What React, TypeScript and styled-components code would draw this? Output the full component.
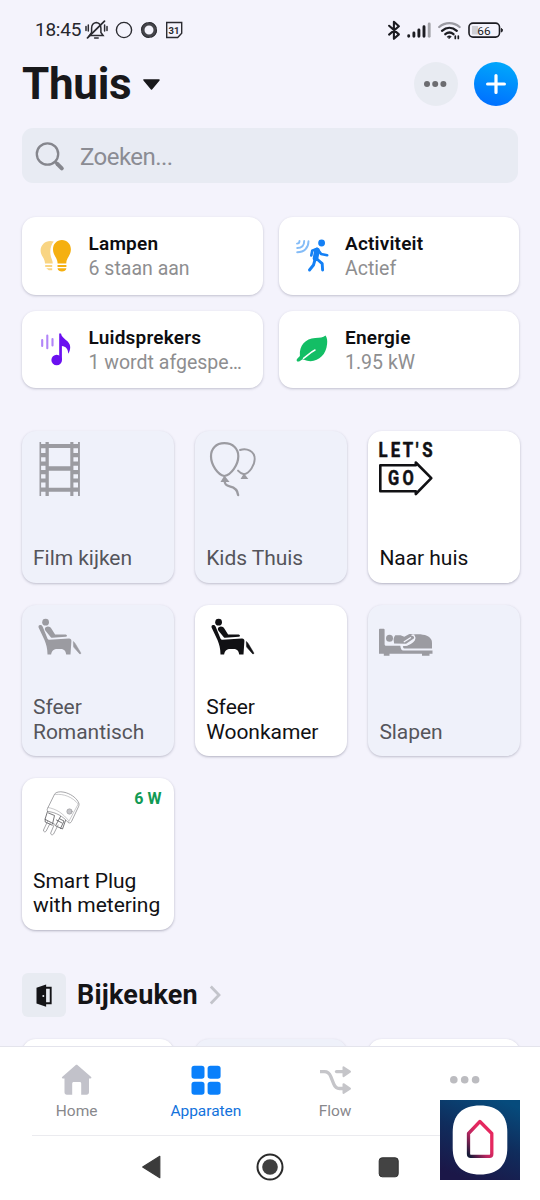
import React from "react";
import styled, { createGlobalStyle } from "styled-components";

const Global = createGlobalStyle`
  * { box-sizing: border-box; }
  body { margin: 0; background: #f4f3fc; font-family: Roboto, "Liberation Sans", sans-serif; }
  svg { display: block; flex: none; overflow: visible; }
`;

const Screen = styled.div`
  width: 540px;
  height: 1200px;
  display: flex;
  flex-direction: column;
  overflow: hidden;
  background: #f4f3fc;
`;

const StatusBar = styled.header`
  flex: none;
  height: 60px;
  padding: 0 38.5px 0 35px;
  display: flex;
  align-items: center;
  justify-content: space-between;
`;

const StatusGroup = styled.div<{ $gap: number }>`
  display: flex;
  align-items: center;
  gap: ${(p) => p.$gap}px;
`;

const Clock = styled.span`
  font-size: 19px;
  line-height: 22px;
  letter-spacing: -0.25px;
  color: #26262c;
  width: 46px;
  white-space: nowrap;
`;

const TitleBar = styled.div`
  flex: none;
  height: 48px;
  padding: 0 22px;
  display: flex;
  align-items: center;
  gap: 16.5px;
`;

const HomeTitle = styled.div`
  flex: 1;
  display: flex;
  align-items: center;
  gap: 12px;
`;

const Title = styled.h1`
  margin: 0;
  font-size: 44px;
  line-height: 48px;
  letter-spacing: -0.3px;
  font-weight: 700;
  color: #18181b;
`;

const RoundButton = styled.button<{ $primary?: boolean }>`
  width: 44px;
  height: 44px;
  border: 0;
  border-radius: 50%;
  padding: 0;
  display: grid;
  place-items: center;
  background: ${(p) => (p.$primary ? "linear-gradient(195deg, #00a8fb 8%, #0072ff 88%)" : "#e8ebf2")};
`;

const SearchField = styled.div`
  flex: none;
  height: 55px;
  margin: 20px 22px 0;
  padding: 2px 0 0 13px;
  border-radius: 11px;
  background: #e8ebf3;
  display: flex;
  align-items: center;
  gap: 16px;
  font-size: 24px;
  letter-spacing: -0.55px;
  color: #8b8c93;
`;

const Content = styled.main`
  flex: 1;
  min-height: 0;
  overflow: hidden;
  padding: 34px 20px 0 22px;
`;

const Summary = styled.section`
  display: grid;
  grid-template-columns: 240.5px 240.5px;
  gap: 16px;
`;

const SummaryCard = styled.article`
  height: 77.5px;
  border-radius: 14px;
  background: #fff;
  box-shadow: 0 1px 2.5px rgba(40, 40, 70, 0.25);
  padding: 0 14px 0 17px;
  display: flex;
  align-items: center;
  gap: 15.5px;
`;

const SummaryText = styled.div`
  min-width: 0;
  flex: 1;
  padding-top: 1px;
`;

const SummaryName = styled.div`
  font-size: 19px;
  line-height: 25px;
  font-weight: 600;
  letter-spacing: 0.2px;
  color: #0d0d10;
`;

const SummaryState = styled.div`
  font-size: 19.5px;
  line-height: 25px;
  letter-spacing: 0.01px;
  color: #8e8e90;
  white-space: nowrap;
`;

const DeviceGrid = styled.section`
  display: grid;
  grid-template-columns: repeat(3, 151.5px);
  grid-auto-rows: 151.5px;
  gap: 22px 21.7px;
`;

const Favourites = styled(DeviceGrid)`
  margin-top: 43px;
`;

const DeviceTile = styled.article<{ $on?: boolean }>`
  border-radius: 14px;
  padding: 11px 8px 11.8px 11px;
  display: flex;
  flex-direction: column;
  justify-content: space-between;
  background: ${(p) => (p.$on ? "#fff" : "#eff1fa")};
  color: ${(p) => (p.$on ? "#111114" : "#55555b")};
  box-shadow: 0 1px 2.5px rgba(40, 40, 70, ${(p) => (p.$on ? 0.32 : 0.26)});
`;

const TileTop = styled.div<{ $on?: boolean }>`
  display: flex;
  justify-content: space-between;
  color: ${(p) => (p.$on ? "#111114" : "#9b9ba1")};
`;

const Power = styled.span`
  margin: 1px 4px 0 0;
  font-size: 16px;
  line-height: 18px;
  font-weight: 700;
  color: #119a54;
`;

const TileName = styled.div`
  font-size: 21px;
  line-height: 24.5px;
  letter-spacing: -0.04px;
  white-space: pre-line;
`;

const ZoneHeader = styled.div`
  margin: 43.5px 0 22px;
  height: 44px;
  display: flex;
  align-items: center;
  gap: 11px;
`;

const ZoneIcon = styled.span`
  width: 44px;
  height: 44px;
  border-radius: 6px;
  background: #e8ebf2;
  display: grid;
  place-items: center;
`;

const ZoneName = styled.h2`
  margin: 0;
  font-size: 27px;
  line-height: 32px;
  font-weight: 700;
  letter-spacing: 0.2px;
  color: #141417;
`;

const Footer = styled.footer`
  flex: none;
  position: relative;
  height: 154px;
  border-top: 1px solid #e4e4ec;
  background: #fff;
`;

const TabBar = styled.nav`
  height: 88px;
  margin: 0 11px 0 12px;
  display: grid;
  grid-template-columns: repeat(4, 1fr);
`;

const Tab = styled.a<{ $active?: boolean }>`
  display: flex;
  flex-direction: column;
  align-items: center;
  padding-top: 17px;
  gap: 5px;
  font-size: 15.5px;
  line-height: 20px;
  letter-spacing: -0.05px;
  color: ${(p) => (p.$active ? "#1272dc" : "#88888c")};
`;

const SystemNav = styled.div`
  height: 65px;
  margin: 0 32px;
  padding: 0 0 2px;
  border-top: 1px solid #ebebef;
  display: flex;
  align-items: center;
  justify-content: center;
`;

const SystemKey = styled.span`
  width: 118.5px;
  display: grid;
  place-items: center;
`;

const AppBadge = styled.div`
  position: absolute;
  right: 20px;
  top: 53px;
  width: 80px;
  height: 80px;
`;

/* status bar icons */
const Muted = () => (
  <svg width="23" height="20" viewBox="85 20 23 20" fill="none" stroke="#2b2b31" strokeWidth="1.5" strokeLinecap="round">
    <path d="M89.5 35.5h13.600l-2.200-3v-4.200c0-3.600-2-5.500-4.600-5.800-2.600.3-4.700 2.200-4.700 5.800v4.200z" />
    <path d="M87.5 37.800 104.500 21.200" strokeWidth="1.8" />
    <path d="M94.600 38h3.600M86 26.500v4M88.300 25v6M104.600 25v6M107 26.500v4" />
  </svg>
);
const Ring = ({ bold }: { bold?: boolean }) => (
  <svg width="17" height="17" viewBox="0 0 17 17" fill="none">
    {bold ? (
      <>
        <circle cx="8" cy="8" r="6.300" stroke="#45454b" strokeWidth="3.600" />
        <circle cx="8" cy="8" r="7.400" stroke="#2b2b31" strokeWidth="1" strokeDasharray="9 2.5" />
      </>
    ) : (
      <circle cx="8" cy="8" r="7.600" stroke="#2b2b31" strokeWidth="1.400" />
    )}
  </svg>
);
const Calendar = () => (
  <svg width="17" height="17" viewBox="0 0 17 17">
    <path d="M.7.5h15v10.800L11.700 15.500H.7z" fill="none" stroke="#2b2b31" strokeWidth="1.400" />
    <text x="8" y="11.500" textAnchor="middle" fontSize="9.500" fontWeight="700" fill="#2b2b31">31</text>
  </svg>
);
const Bluetooth = () => (
  <svg width="13" height="20" viewBox="386.500 19 13 20" fill="none" stroke="#1c1c22" strokeWidth="2.100" strokeLinejoin="round" strokeLinecap="round">
    <path d="m388.600 24.800 9.800 8.600-5 4.400V20.800l5 4.400-9.800 8.400" />
  </svg>
);
const Signal = () => (
  <svg width="24" height="16" viewBox="0 0 24 16" strokeWidth="2.900" strokeLinecap="round" stroke="#1c1c22">
    <path d="M1.700 13.800v.4M6.900 11v3.200M11.900 8v6.200M17 4.800v9.400" />
    <path d="M22.200 2v12.200" stroke="#a4a4aa" />
  </svg>
);
const Wifi = () => (
  <svg width="23" height="18" viewBox="437 20 23 18" fill="none" strokeLinecap="round" strokeWidth="2.300">
    <path d="M438.200 26c6-5.200 14.400-5.200 20.400 0" stroke="#9a9aa2" />
    <path d="M441 29.800c4.600-4 10.200-4 14.800 0M444.300 33.200c2.600-2.200 5.700-2.200 8.200 0" stroke="#1c1c22" />
    <path d="M446.300 35.600c1.300-1 2.700-1 4 0l-2 2z" fill="#1c1c22" stroke="#1c1c22" strokeWidth=".6" />
    <path d="M454.300 37.500v-2.500M457.300 35v2.500" stroke="#1c1c22" strokeWidth="1.700" />
  </svg>
);
const Battery = () => (
  <svg width="34" height="16" viewBox="467 21.500 34 16">
    <rect x="468" y="22.600" width="30.500" height="14" rx="4" fill="none" stroke="#1c1c22" strokeWidth="1.600" />
    <path d="M471 25.500h6v8.500h-6z" fill="#d0d0d6" />
    <path d="M500.300 28c1.500 0 1.500 3.500 0 3.500z" fill="#1c1c22" stroke="#1c1c22" />
    <text x="483" y="34" textAnchor="middle" fontSize="11.800" fill="#1c1c22">66</text>
  </svg>
);

const Caret = () => (
  <svg width="17" height="12" viewBox="0 0 17 12">
    <path d="M1 1.900h15L8.500 10.900z" fill="#18181b" stroke="#18181b" strokeWidth="1.500" strokeLinejoin="round" />
  </svg>
);
const Dots = ({ color, r, gap }: { color: string; r: number; gap: number }) => (
  <svg width={gap * 2 + r * 2} height={r * 2} fill={color}>
    <circle cx={r} cy={r} r={r} />
    <circle cx={r + gap} cy={r} r={r} />
    <circle cx={r + gap * 2} cy={r} r={r} />
  </svg>
);
const Plus = () => (
  <svg width="20" height="20" stroke="#fff" strokeWidth="3.200" strokeLinecap="round">
    <path d="M10 1.600v16.800M1.600 10h16.800" />
  </svg>
);
const Magnifier = () => (
  <svg width="29" height="29" viewBox="35 142 29 29" fill="none" stroke="#85868d">
    <circle cx="47.500" cy="154" r="10.700" strokeWidth="2.300" />
    <path d="m55 161.500 2.300 2.300" strokeWidth="2.500" />
    <path d="m57.300 163.800 4.500 4.500" strokeWidth="4" strokeLinecap="round" />
  </svg>
);

/* summary icons */
const Bulbs = () => (
  <svg width="34" height="34" viewBox="39 239 34 34">
    <g fill="#f9d583">
      <path d="M53.800 241.500c-7-2.200-13.200 2.500-13.200 9 0 5.500 4.400 7.400 4.400 13h7.800c0-3-2.500-6-2.500-11.500 0-4.500 1.300-8 3.500-10.500z" />
      <path d="M45.200 265h7v1.900h-7zM46.200 268.300h6v1.900h-3.400z" />
    </g>
    <g fill="#f5b010">
      <path d="M61.900 240c-5.100 0-8.900 4-8.900 9.300 0 6.500 4.500 8 4.600 14.200h8.700c.1-6.200 4.600-7.700 4.600-14.200 0-5.300-3.900-9.300-9-9.300z" />
      <path d="M57.500 265h8.900v1.900h-8.900zM57.500 268.300h8.900c-.5 4.300-8.400 4.300-8.900 0z" />
    </g>
  </svg>
);
const Motion = () => (
  <svg width="34" height="34" viewBox="296 239 34 34" fill="none" strokeLinecap="round" strokeLinejoin="round">
    <g stroke="#84bcf7" strokeWidth="1.900">
      <path d="M297 243.600c1.700 0 2.500-.8 2.500-2.600M297.200 248c4.300 0 7-2.500 7-7M297.200 252.200c7 0 11.300-4.300 11.300-11" />
    </g>
    <circle cx="321.600" cy="243" r="3.400" fill="#1480f5" />
    <g stroke="#1480f5">
      <path d="m311.300 255.500.9-4.700 5-2 3.800 5.100 6.200 1.300" strokeWidth="2.600" />
      <path d="m317 250.500-1.500 8" strokeWidth="5.600" />
      <path d="m315.200 259-1.700 6-4 5M317.500 259.500l4.700 4.200.4 6.300" strokeWidth="2.900" />
    </g>
  </svg>
);
const Music = () => (
  <svg width="34" height="34" viewBox="39 332 34 34">
    <path d="M42.200 340v6M47.300 335.600v12.600M52.500 339v6.500" stroke="#b184f8" strokeWidth="2.100" strokeLinecap="round" />
    <circle cx="56.700" cy="360" r="5.300" fill="#6a10f0" />
    <path d="M59.200 333.500h1.800c.8 5.500 9.200 7 9.200 13.500 0 2.500-.6 4.600-2 6.800 0-5-2.500-7.300-6.300-7.800v14h-2.700z" fill="#6a10f0" />
  </svg>
);
const Leaf = () => (
  <svg width="34" height="34" viewBox="296 332 34 34">
    <path d="M325.500 335.500c1.600 2 2 5 1.600 8.600-1.100 11.500-9.600 18.700-20 16.700-1.700-.3-3-.9-4.500-1.500l-3.500 2.100c-2 .8-3.300-1-1.900-2.700l2.700-2.700c-.8-10.600 5.500-17.200 15.300-17.900 4.800-.4 7.800-.6 10.300-2.600z" fill="#13be65" />
    <path d="M303.500 358.300c3.500-2.300 6.500-5.800 11.500-8.300" stroke="#fff" strokeWidth="1.500" fill="none" strokeLinecap="round" />
  </svg>
);

/* device icons, all on a 54 unit canvas */
const DeviceSvg = styled.svg`
  width: 54px;
  height: 54px;
`;
const Film = () => (
  <DeviceSvg viewBox="0 0 54 54" fill="currentColor">
    <path d="M6.500 0h1.600v54H6.500zM12.500 0h3.300v54h-3.300zM37.300 0h3.100v54h-3.100zM45 0h1.900v54H45zM15 2h23v4H15zM15 24.300h23v4.400H15zM15 45.800h23v4H15z" />
    {[2, 11, 19.600, 28, 36.400, 45.600].map((y) => (
      <path key={y} d={`M7 ${y}h6v4.200h-6zM39.500 ${y}h6v4.200h-6z`} />
    ))}
  </DeviceSvg>
);
const Balloons = () => (
  <DeviceSvg viewBox="0 0 54 54" fill="none" stroke="currentColor" strokeLinecap="round">
    <path d="M18.300 1.200C9.800 1.200 5 7 5 14.200c0 8.500 6.700 18.600 13.300 19.800 7-1.200 14-11.300 14-19.800C32.300 7 27.200 1.200 18.300 1.200z" strokeWidth="2.200" />
    <path d="m18.500 35-2.600 4.200h6z" fill="currentColor" strokeWidth="1.600" />
    <path d="M18.700 39c0 3.500 1.300 4.500 5 5.300 4.500 1 8 3.500 8.400 8.700" strokeWidth="2.400" />
    <path d="M34 8c6.700-2.400 14.700 1 14.700 9 0 6-5 14.300-10.700 15.300-2.200-.4-4.200-1.700-6-3.700" strokeWidth="1.900" />
    <path d="m38 32.500-2.300 3.800h5.300z" fill="currentColor" strokeWidth="1.300" />
  </DeviceSvg>
);
const LetsGo = () => (
  <DeviceSvg viewBox="0 0 54 54" fill="currentColor" fontFamily="Roboto, sans-serif" fontWeight="700">
    <g stroke="currentColor" strokeWidth=".5" strokeLinejoin="round">
      <text transform="translate(-.6 14.700) scale(.84 1)" x="0 14.800 29 44.500 52.100" fontSize="20">LET'S</text>
      <text transform="translate(9 43.200) scale(.84 1)" x="0 17.300" fontSize="19.500">GO</text>
    </g>
    <path d="M1.300 23.300h35.500v-2.800L52.300 36.200 36.800 52v-2.800H1.300z" fill="none" stroke="currentColor" strokeWidth="2.600" strokeLinejoin="round" />
  </DeviceSvg>
);
const Recliner = () => (
  <DeviceSvg viewBox="0 0 54 54" fill="currentColor">
    <circle cx="12.600" cy="6.200" r="3.400" />
    <path d="M6.300 9.300c1.500-.8 2.700-.2 3.300 1.200l5 12.200c.4.800.9 1.100 1.700 1l19.500-1.300c1.800-.1 2.700.9 2.600 2.600l-.9 13.500h-4.300c-.4-3.900-2.500-5.500-5.700-5.500h-3.300c-3.200 0-5.400 1.600-6.100 5.500h-3.600c0-6-1.300-10.200-3-14.500L5.600 11.500c-.3-1 0-1.800.7-2.200z" />
    <path d="M12.800 11.200c2.200-1.200 4.500-.5 5.700 1.500l3.600 5.800 10.600-.1c1.700.1 1.700 2.200 0 2.400l-13.500 1c-1 0-1.500-.3-2-1.200L12.300 14.500c-.8-1.400-.5-2.600.5-3.300z" />
    <path d="M40.300 25.500l.2 4.700c0 .6.200 1 .6 1.400l5.400 6.100c.7.600 1.600 0 1.200-1l-5.400-9c-.6-1-1.900-2.300-2-2.200z" stroke="currentColor" strokeWidth=".5" />
  </DeviceSvg>
);
const Bed = () => (
  <DeviceSvg viewBox="0 0 54 54" fill="currentColor">
    <path d="M.9 12.800h3.800c.6 0 .9.300.9.900v14.600c0 .8.500 1.500 1.500 1.500h14.200c.5 3 1 4.700 3 4.700h29.200v3.200h-3v2h-7.500v-2H10.500v2H4.800v-2H0V13.700c0-.6.300-.9.900-.9z" />
    <circle cx="10.500" cy="22.300" r="3.500" />
    <path d="M16.300 19.200h5.200l3.800 1.600 4.600-2.600c3.600-.5 7 .7 5.200 4l-8 5.500-12-.2c0-3.200-1.600-4.600 1.200-8.300z" />
    <path d="M34.500 18.400c10-.9 16 1.200 18 5.600.4 1 .5 2 .5 3.500v5H25.500c-1.500 0-1.500-1.500-1.700-3h3.400c4-1.500 7-3.500 8.500-6 .9-2 .5-3.700-1.200-5.100z" />
    <path d="m25.200 25.700 6.300-4M22.300 29.500l6-.5c4-1.700 7.200-4.500 7.500-6.500.2-2-1-3.200-2.800-3.300" stroke="#f3f4fc" strokeWidth="1.300" strokeLinecap="round" fill="none" />
  </DeviceSvg>
);
const SmartPlug = () => (
  <DeviceSvg viewBox="0 0 54 54" fill="none" stroke="#88888c" strokeWidth=".75" strokeLinejoin="round" strokeLinecap="round">
    <path d="M22 4.500c1-1.300 4.500-2.300 9-1.300 6 1.300 11.500 5 14 9.300 1.300 2 1.300 3.300.5 5.200L38.500 32.500c-.7 1.400-2 2-3.300 1-5.500-6.500-12.200-10-20-11-1.200-1-1.400-1.800-.7-3z" />
    <path d="M22.500 5.500c8-1 17 2.500 22.700 9.500L35.500 33M15 18.500c8.700 1.500 15 6 20.500 13" opacity=".6" />
    <circle cx="36.500" cy="22.500" r="2.700" fill="#c4c4c8" strokeWidth=".5" />
    <path d="m14.500 22.500-2.500 7.800 8.500 4.500M27.500 27.500l-5 9.300 7 3.200 3-8.500M15.500 24l6 2.500-2 8.500M27 30l4 2-3.500 7.500M12.200 30.300v2.700l7 3.200M23.500 31l5.500 3" stroke="#66666a" strokeWidth=".9" />
    <path d="m14.500 32.500-4 8.500c-.4 1.800 1.600 2.500 2.600 1.200l4.200-8.300M21.500 35l-3.800 9c-.3 1.800 1.900 2.500 2.900 1l4.500-9" />
  </DeviceSvg>
);
const Door = () => (
  <svg width="16" height="23" viewBox="36.500 983.500 16 23">
    <path d="M37 987.200 46.600 984v22.300L37 1003z" fill="#141417" />
    <circle cx="43.800" cy="995.400" r="1" fill="#e8ebf2" />
    <path d="M46.300 987.300h4.900v15.400h-4.900" fill="none" stroke="#141417" strokeWidth="1.900" />
  </svg>
);
const Chevron = () => (
  <svg width="12" height="20" fill="none" stroke="#c3c4cb" strokeWidth="2.800">
    <path d="m1.800 1.500 8.200 8.500-8.200 8.500" />
  </svg>
);

/* bottom bar icons */
const House = () => (
  <svg width="32" height="32" viewBox="60.500 1064 32 32">
    <path d="M75 1065.200c.7-.6 1.500-.6 2.200 0l13.200 11.600c1 1 .6 1.700-.6 1.700h-1.300v13.700c0 1.600-1 2.500-2.500 2.500h-5.300v-11c0-1-.5-1.600-1.500-1.600h-6c-1 0-1.500.6-1.500 1.600v11h-5.300c-1.500 0-2.400-.9-2.400-2.500v-13.700h-1.500c-1.200 0-1.500-.8-.6-1.700z" fill="#c2c2ca" />
  </svg>
);
const Squares = () => (
  <svg width="32" height="32" fill="#0a80fb">
    <rect x="1.500" y="1.800" width="13" height="13" rx="2.800" />
    <rect x="17.600" y="1.800" width="13" height="13" rx="2.800" />
    <rect x="1.500" y="17.800" width="13" height="13" rx="2.800" />
    <rect x="17.600" y="17.800" width="13" height="13" rx="2.800" />
  </svg>
);
const FlowIcon = () => (
  <svg width="32" height="32" viewBox="319 1064 32 32" fill="none" stroke="#c5c5c9" strokeWidth="3.300">
    <path d="M320 1071.600h4.500c3 0 5 1.800 6.200 4.800l3 7.400c1.200 3 3 4.700 5.800 4.700h5" />
    <path d="M336.500 1071.600h8" strokeLinecap="round" />
    <path d="m343.500 1067.300 6.500 4.400-6.500 4.400zM343.500 1084.200l6.500 4.400-6.500 4.400z" fill="#c5c5c9" strokeWidth="2" strokeLinejoin="round" />
  </svg>
);
const TabDots = styled.span`
  height: 32px;
  display: grid;
  place-items: center;
`;

const BackKey = () => (
  <svg width="20" height="24" viewBox="0 0 20 24">
    <path d="M17.800 1.300v21.400L.700 12z" fill="#3b3b3b" stroke="#3b3b3b" strokeWidth="1.200" strokeLinejoin="round" />
  </svg>
);
const HomeKey = () => (
  <svg width="28" height="28">
    <circle cx="14" cy="14" r="12.500" fill="none" stroke="#2b2b2b" strokeWidth="2" />
    <circle cx="14" cy="14" r="7.800" fill="#3f3f3f" />
  </svg>
);
const RecentKey = () => (
  <svg width="20" height="20">
    <rect x=".2" y=".8" width="19" height="19" rx="3" fill="#434343" stroke="#2f2f2f" />
  </svg>
);
const AppLogo = () => (
  <svg width="80" height="80" viewBox="0 0 80 80">
    <defs>
      <linearGradient id="night" x1=".75" y1="0" x2=".35" y2="1">
        <stop offset="0" stopColor="#064b7c" />
        <stop offset=".5" stopColor="#102c5c" />
        <stop offset="1" stopColor="#1b1748" />
      </linearGradient>
      <linearGradient id="roof" x1=".6" y1=".4" x2=".05" y2="1">
        <stop offset="0" stopColor="#e5285f" />
        <stop offset=".4" stopColor="#b92660" />
        <stop offset="1" stopColor="#151a38" />
      </linearGradient>
    </defs>
    <path d="M0 0h80v80H0z" fill="url(#night)" />
    <path d="M40 5.500C58 5.500 67.300 15 67.300 32v16C67.300 65 58 74.500 40 74.500S12.700 65 12.700 48V32C12.700 15 22 5.500 40 5.500z" fill="#fff" />
    <path d="m39.900 21.500 11.900 12V54c0 1.700-.8 2.300-2.300 2.300H30.800c-1.500 0-2.300-.6-2.300-2.300V33.500z" fill="none" stroke="url(#roof)" strokeWidth="3.300" strokeLinejoin="round" />
  </svg>
);

const summary = [
  { name: "Lampen", state: "6 staan aan", icon: <Bulbs /> },
  { name: "Activiteit", state: "Actief", icon: <Motion /> },
  { name: "Luidsprekers", state: "1 wordt afgespe…", icon: <Music /> },
  { name: "Energie", state: "1.95 kW", icon: <Leaf /> },
];

const devices: { name: string; on?: boolean; icon: React.ReactNode; power?: string }[] = [
  { name: "Film kijken", icon: <Film /> },
  { name: "Kids Thuis", icon: <Balloons /> },
  { name: "Naar huis", on: true, icon: <LetsGo /> },
  { name: "Sfeer\nRomantisch", icon: <Recliner /> },
  { name: "Sfeer\nWoonkamer", on: true, icon: <Recliner /> },
  { name: "Slapen", icon: <Bed /> },
  { name: "Smart Plug\nwith metering", on: true, icon: <SmartPlug />, power: "6 W" },
];

export default function App() {
  return (
    <Screen>
      <Global />
      <StatusBar>
        <StatusGroup $gap={8}>
          <StatusGroup $gap={4}>
            <Clock>18:45</Clock>
            <Muted />
          </StatusGroup>
          <Ring />
          <Ring bold />
          <Calendar />
        </StatusGroup>
        <StatusGroup $gap={7}>
          <Bluetooth />
          <Signal />
          <Wifi />
          <Battery />
        </StatusGroup>
      </StatusBar>
      <TitleBar>
        <HomeTitle>
          <Title>Thuis</Title>
          <Caret />
        </HomeTitle>
        <RoundButton aria-label="Meer">
          <Dots color="#6c6c70" r={3} gap={8.200} />
        </RoundButton>
        <RoundButton $primary aria-label="Toevoegen">
          <Plus />
        </RoundButton>
      </TitleBar>
      <SearchField>
        <Magnifier />
        Zoeken...
      </SearchField>
      <Content>
        <Summary>
          {summary.map((s) => (
            <SummaryCard key={s.name}>
              {s.icon}
              <SummaryText>
                <SummaryName>{s.name}</SummaryName>
                <SummaryState>{s.state}</SummaryState>
              </SummaryText>
            </SummaryCard>
          ))}
        </Summary>
        <Favourites>
          {devices.map((d) => (
            <DeviceTile key={d.name} $on={d.on}>
              <TileTop $on={d.on}>
                {d.icon}
                {d.power && <Power>{d.power}</Power>}
              </TileTop>
              <TileName>{d.name}</TileName>
            </DeviceTile>
          ))}
        </Favourites>
        <ZoneHeader>
          <ZoneIcon>
            <Door />
          </ZoneIcon>
          <ZoneName>Bijkeuken</ZoneName>
          <Chevron />
        </ZoneHeader>
        <DeviceGrid>
          <DeviceTile $on />
          <DeviceTile />
          <DeviceTile $on />
        </DeviceGrid>
      </Content>
      <Footer>
        <TabBar>
          <Tab>
            <House />
            Home
          </Tab>
          <Tab $active>
            <Squares />
            Apparaten
          </Tab>
          <Tab>
            <FlowIcon />
            Flow
          </Tab>
          <Tab>
            <TabDots>
              <Dots color="#bcbcc0" r={3.800} gap={10.900} />
            </TabDots>
          </Tab>
        </TabBar>
        <SystemNav>
          <SystemKey>
            <BackKey />
          </SystemKey>
          <SystemKey>
            <HomeKey />
          </SystemKey>
          <SystemKey>
            <RecentKey />
          </SystemKey>
        </SystemNav>
        <AppBadge>
          <AppLogo />
        </AppBadge>
      </Footer>
    </Screen>
  );
}
